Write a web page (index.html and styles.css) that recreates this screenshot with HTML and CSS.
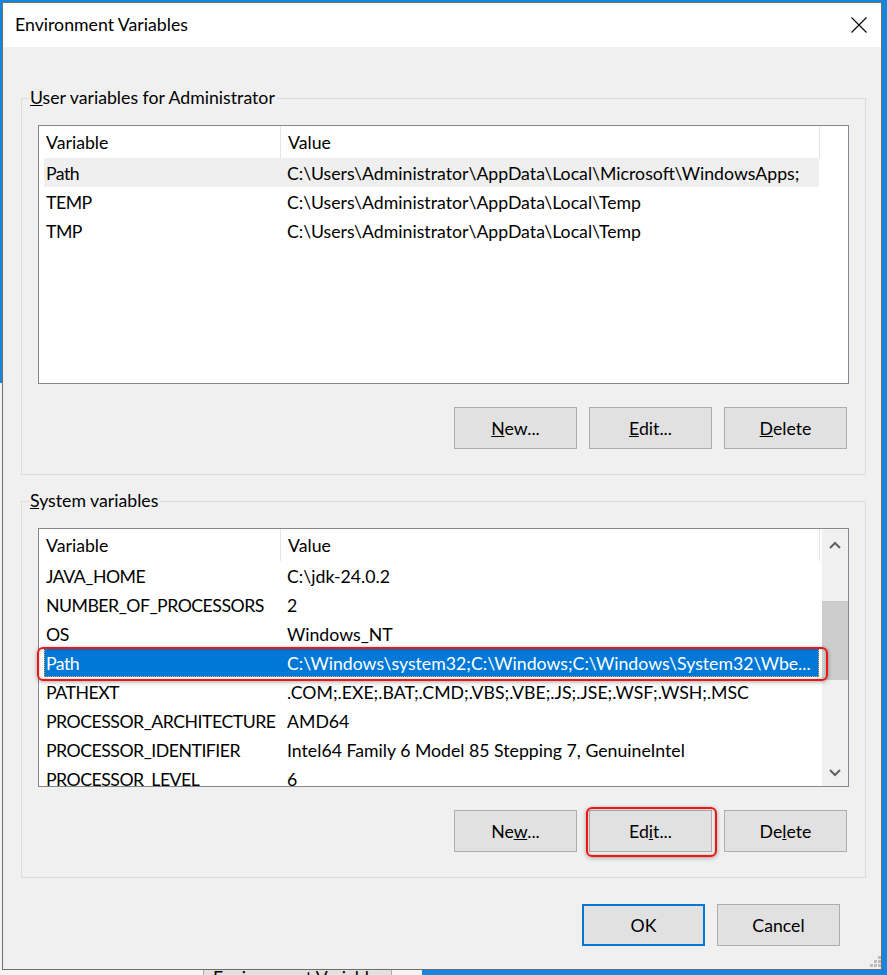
FILE: index.html
```html
<!DOCTYPE html>
<html>
<head>
<meta charset="utf-8">
<title>Environment Variables</title>
<link rel="stylesheet" href="styles.css">
</head>
<body>
<div class="desktop">
  <div class="back-window">
    <div class="back-btn">Environment Variables</div>
  </div>
  <div class="dialog">
    <div class="titlebar">
      <span class="title">Environment Variables</span>
      <svg class="close" width="16" height="16" viewBox="0 0 16 16"><path d="M0.5 0.5 L15.5 15.5 M15.5 0.5 L0.5 15.5" stroke="#000" stroke-width="1.1" fill="none"/></svg>
    </div>
    <div class="client">
      <div class="group">
        <div class="legend"><u>U</u>ser variables for Administrator</div>
        <div class="list">
          <div class="lv">
            <div class="lv-header"><div class="hcell h1">Variable</div><div class="hcell h2">Value</div></div>
            <div class="row dim"><span class="c1">Path</span><span class="c2">C:\Users\Administrator\AppData\Local\Microsoft\WindowsApps;</span></div>
            <div class="row"><span class="c1">TEMP</span><span class="c2">C:\Users\Administrator\AppData\Local\Temp</span></div>
            <div class="row"><span class="c1">TMP</span><span class="c2">C:\Users\Administrator\AppData\Local\Temp</span></div>
          </div>
        </div>
        <div class="btns">
          <div class="btn"><span><u>N</u>ew...</span></div>
          <div class="btn"><span><u>E</u>dit...</span></div>
          <div class="btn"><span><u>D</u>elete</span></div>
        </div>
      </div>
      <div class="group">
        <div class="legend"><u>S</u>ystem variables</div>
        <div class="list">
          <div class="lv">
            <div class="lv-header"><div class="hcell h1">Variable</div><div class="hcell h2">Value</div></div>
            <div class="row"><span class="c1">JAVA_HOME</span><span class="c2">C:\jdk-24.0.2</span></div>
            <div class="row"><span class="c1">NUMBER_OF_PROCESSORS</span><span class="c2">2</span></div>
            <div class="row"><span class="c1">OS</span><span class="c2">Windows_NT</span></div>
            <div class="row sel"><span class="c1">Path</span><span class="c2">C:\Windows\system32;C:\Windows;C:\Windows\System32\Wbe...</span></div>
            <div class="row"><span class="c1">PATHEXT</span><span class="c2">.COM;.EXE;.BAT;.CMD;.VBS;.VBE;.JS;.JSE;.WSF;.WSH;.MSC</span></div>
            <div class="row"><span class="c1">PROCESSOR_ARCHITECTURE</span><span class="c2">AMD64</span></div>
            <div class="row"><span class="c1">PROCESSOR_IDENTIFIER</span><span class="c2">Intel64 Family 6 Model 85 Stepping 7, GenuineIntel</span></div>
            <div class="row"><span class="c1">PROCESSOR_LEVEL</span><span class="c2">6</span></div>
          </div>
          <div class="sb">
            <div class="sb-up"><svg width="12" height="8" viewBox="0 0 12 8"><polyline points="1,7 6,2 11,7" fill="none" stroke="#606060" stroke-width="2"/></svg></div>
            <div class="thumb"></div>
            <div class="sb-down"><svg width="12" height="8" viewBox="0 0 12 8"><polyline points="1,1 6,6 11,1" fill="none" stroke="#606060" stroke-width="2"/></svg></div>
          </div>
        </div>
        <div class="btns">
          <div class="btn"><span>Ne<u>w</u>...</span></div>
          <div class="btn"><span>Ed<u>i</u>t...</span></div>
          <div class="btn"><span>De<u>l</u>ete</span></div>
        </div>
        <div class="mark mark-row"></div>
        <div class="mark mark-btn"></div>
      </div>
      <div class="dlg-btns">
        <div class="btn default"><span>OK</span></div>
        <div class="btn"><span>Cancel</span></div>
      </div>
      <svg class="grip" width="11" height="11" viewBox="0 0 11 11">
        <rect x="8" y="0" width="3" height="3" fill="#bcbcbc"/>
        <rect x="4" y="4" width="3" height="3" fill="#bcbcbc"/>
        <rect x="8" y="4" width="3" height="3" fill="#bcbcbc"/>
        <rect x="0" y="8" width="3" height="3" fill="#bcbcbc"/>
        <rect x="4" y="8" width="3" height="3" fill="#bcbcbc"/>
        <rect x="8" y="8" width="3" height="3" fill="#bcbcbc"/>
      </svg>
    </div>
  </div>
</div>
</body>
</html>
```
FILE: styles.css
```css
* { box-sizing: border-box; }
html, body { margin: 0; padding: 0; }
body {
  width: 887px;
  height: 975px;
  overflow: hidden;
  font-family: Lato, "Liberation Sans", sans-serif;
  font-size: 17.7px;
  color: #000;
}
u { text-decoration: underline; text-decoration-thickness: 1px; text-underline-offset: 1px; }

.desktop {
  position: relative;
  width: 887px;
  height: 975px;
  background: #1685dc;
  overflow: hidden;
}
.back-window {
  position: absolute;
  left: 0;
  top: 383px;
  width: 422px;
  height: 592px;
  background: #f4f4f4;
}
.back-btn {
  position: absolute;
  left: 203px;
  top: 580px;
  width: 189px;
  height: 30px;
  background: #e1e1e1;
  border: 1px solid #adadad;
  padding-left: 9px;
  line-height: 28px;
  white-space: nowrap;
  overflow: hidden;
}

.dialog {
  position: absolute;
  left: 2px;
  top: 2px;
  width: 880px;
  height: 968px;
  border: 1px solid #6e6e6e;
  background: #f0f0f0;
  display: flex;
  flex-direction: column;
}
.titlebar {
  flex: none;
  height: 44px;
  background: #fff;
  display: flex;
  align-items: center;
  padding-left: 12px;
}
.title { line-height: 44px; white-space: nowrap; }
.close { margin-left: auto; margin-right: 14px; display: block; }

.client {
  flex: 1;
  position: relative;
  padding: 51px 0 0 18px;
}
.group {
  position: relative;
  width: 845px;
  border: 1px solid #dcdcdc;
  padding: 26px 16px 25px 16px;
}
.group + .group { margin-top: 26px; }
.legend {
  position: absolute;
  left: 7px;
  top: -12px;
  padding: 0 2px 0 1px;
  background: #f0f0f0;
  line-height: 22px;
  white-space: nowrap;
}

.list {
  width: 811px;
  height: 259px;
  border: 1px solid #828790;
  background: #fff;
  display: flex;
  overflow: hidden;
}
.lv { flex: 1; min-width: 0; overflow: hidden; }
.lv-header { display: flex; height: 32px; }
.hcell {
  height: 32px;
  padding-top: 2px;
  line-height: 30px;
  padding-left: 7px;
  border-right: 1px solid #e5e5e5;
  white-space: nowrap;
}
.h1 { width: 242px; }
.h2 { width: 539px; }

.row {
  display: flex;
  width: 775px;
  height: 29px;
  padding-top: 2px;
  line-height: 27px;
  margin-left: 5px;
  white-space: nowrap;
}
.row .c1 { width: 236px; padding-left: 2px; flex: none; letter-spacing: -0.5px; }
.row .c2 { width: 539px; padding-left: 7px; overflow: hidden; flex: none; }
.row.dim { background: #efefef; }
.row.sel {
  background: #0078d7;
  color: #fff;
  outline: 1px dotted #e3a84e;
  outline-offset: -1px;
}

.sb {
  flex: none;
  width: 26px;
  background: #f0f0f0;
  display: flex;
  flex-direction: column;
}
.sb-up, .sb-down {
  display: flex;
  align-items: center;
  justify-content: center;
}
.sb-up { height: 32px; }
.sb-down { height: 27px; margin-top: auto; }
.sb svg { display: block; }
.thumb { height: 79px; margin-top: 40px; background: #cdcdcd; }

.btns {
  display: flex;
  justify-content: flex-end;
  gap: 12px;
  margin-top: 23px;
  padding-right: 2px;
}
.btn {
  width: 123px;
  height: 42px;
  background: #e1e1e1;
  border: 1px solid #adadad;
  display: flex;
  align-items: center;
  justify-content: center;
  white-space: nowrap;
}
.btn.default { border: 2px solid #0078d7; }

.dlg-btns {
  display: flex;
  justify-content: flex-end;
  gap: 12px;
  margin-top: 26px;
  padding-right: 41px;
}

.mark {
  position: absolute;
  border: 2px solid #f01414;
  border-radius: 6px;
  box-shadow: 0 1px 4px rgba(0,0,0,0.35), inset 0 0 3px rgba(0,0,0,0.25);
}
.mark-row { left: 15px; top: 145px; width: 791px; height: 34px; }
.mark-btn { left: 564px; top: 305px; width: 131px; height: 50px; }

.grip { position: absolute; right: 0; bottom: 2px; display: block; }
```
